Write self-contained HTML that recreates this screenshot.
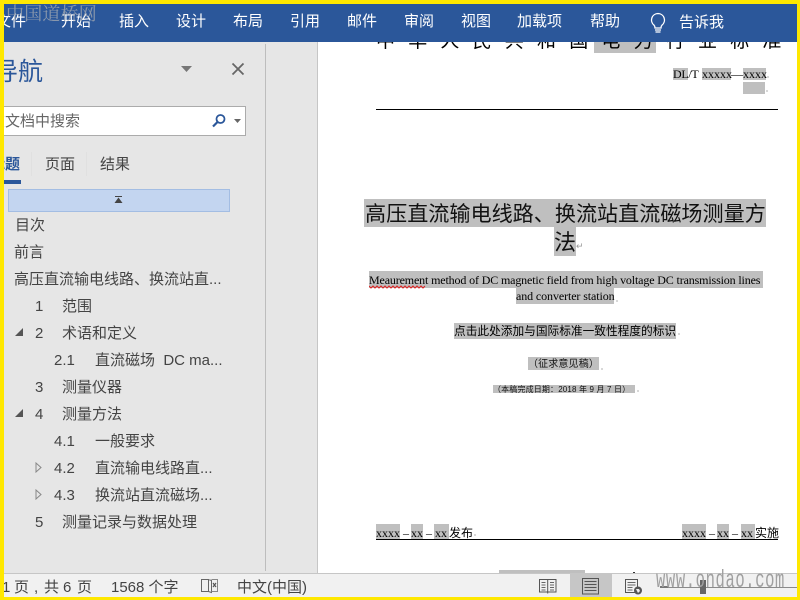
<!DOCTYPE html>
<html><head><meta charset="utf-8">
<style>
html,body{margin:0;padding:0;background:#fff;}
#p{position:relative;width:800px;height:600px;overflow:hidden;background:#fff;font-family:"Liberation Sans","Noto Sans CJK SC",sans-serif;}
#p div{position:absolute;white-space:nowrap;}
.t{color:#fff;font-size:15px;line-height:20px;top:12px;}
.n{color:#444;font-size:15px;line-height:20px;}
.doc{font-family:"Liberation Serif","Noto Sans CJK SC",serif;color:#000;font-size:12px;line-height:16px;}
.g{background:#bfbfbf;}
.d{background:#d8d8d8;width:2px;height:2px;}
</style></head><body>
<div id="p">
<!-- document page -->
<div style="left:318px;top:42px;width:482px;height:532px;background:#fff;"></div>
<div style="left:594px;top:42px;width:62px;height:11px;background:#bfbfbf;"></div>
<div style="left:376px;top:30px;font-size:19px;line-height:24px;letter-spacing:13.2px;color:#000;">中华人民共和国电力行业标准</div>
<div class="g" style="left:673px;top:68px;width:15px;height:12px;"></div>
<div class="g" style="left:702px;top:68px;width:29px;height:12px;"></div>
<div class="g" style="left:743px;top:68px;width:23px;height:12px;"></div>
<div class="g" style="left:743px;top:82px;width:22px;height:12px;"></div>
<div class="doc" style="left:673px;top:66px;letter-spacing:-.3px;">DL/T</div>
<div class="doc" style="left:702px;top:66px;">xxxxx</div>
<div class="doc" style="left:731px;top:66px;">—</div>
<div class="doc" style="left:743px;top:66px;">xxxx</div>
<div class="d" style="left:767px;top:76px;"></div>
<div class="d" style="left:766px;top:90px;"></div>
<div style="left:376px;top:109px;width:402px;height:1px;background:#000;"></div>

<div class="g" style="left:364px;top:199px;width:402px;height:28px;"></div>
<div class="g" style="left:554px;top:227px;width:22px;height:29px;"></div>
<div style="left:365px;top:201px;font-size:21.1px;line-height:28px;color:#111;">高压直流输电线路、换流站直流磁场测量方</div>
<div style="left:554px;top:229px;font-size:22px;line-height:28px;color:#111;">法</div>
<div style="left:576px;top:240px;font-size:9px;line-height:12px;color:#999;">↵</div>

<div class="g" style="left:369px;top:271px;width:394px;height:17px;"></div>
<div class="g" style="left:516px;top:288px;width:98px;height:16px;"></div>
<div class="doc" style="left:369px;top:272px;letter-spacing:-.14px;">Meaurement method of DC magnetic field from high voltage DC transmission lines</div>
<div class="doc" style="left:516px;top:288px;letter-spacing:-.1px;">and converter station</div>
<div class="d" style="left:616px;top:300px;"></div>
<svg style="position:absolute;left:369px;top:284px;" width="60" height="5"><path d="M0 2 l2 2 l2-2 l2 2 l2-2 l2 2 l2-2 l2 2 l2-2 l2 2 l2-2 l2 2 l2-2 l2 2 l2-2 l2 2 l2-2 l2 2 l2-2 l2 2 l2-2 l2 2 l2-2 l2 2 l2-2 l2 2 l2-2 l2 2 l2-2" fill="none" stroke="#d22" stroke-width="1"/></svg>

<div class="g" style="left:454px;top:323px;width:222px;height:16px;"></div>
<div style="left:454px;top:323px;font-size:11.7px;line-height:18px;color:#000;">点击此处添加与国际标准一致性程度的标识</div>
<div class="d" style="left:678px;top:333px;"></div>

<div class="g" style="left:528px;top:357px;width:71px;height:13px;"></div>
<div style="left:528px;top:358px;font-size:10px;line-height:13px;color:#111;letter-spacing:.14px;">（征求意见稿）</div>
<div class="d" style="left:601px;top:368px;"></div>

<div class="g" style="left:493px;top:385px;width:142px;height:8px;"></div>
<div style="left:493px;top:385px;font-size:8px;line-height:10px;color:#111;letter-spacing:.15px;">（本稿完成日期：2018 年 9 月 7 日）</div>
<div class="d" style="left:637px;top:390px;"></div>

<div class="g" style="left:376px;top:524px;width:24px;height:15px;"></div>
<div class="g" style="left:411px;top:524px;width:12px;height:15px;"></div>
<div class="g" style="left:434px;top:524px;width:15px;height:15px;"></div>
<div class="doc" style="left:376px;top:525px;">xxxx</div>
<div class="doc" style="left:403px;top:525px;">–</div>
<div class="doc" style="left:411px;top:525px;">xx</div>
<div class="doc" style="left:426px;top:525px;">–</div>
<div class="doc" style="left:435px;top:525px;">xx</div>
<div class="doc" style="left:449px;top:525px;">发布</div>
<div class="d" style="left:474px;top:534px;"></div>

<div class="g" style="left:682px;top:524px;width:24px;height:15px;"></div>
<div class="g" style="left:717px;top:524px;width:12px;height:15px;"></div>
<div class="g" style="left:741px;top:524px;width:14px;height:15px;"></div>
<div class="doc" style="left:682px;top:525px;">xxxx</div>
<div class="doc" style="left:709px;top:525px;">–</div>
<div class="doc" style="left:717px;top:525px;">xx</div>
<div class="doc" style="left:732px;top:525px;">–</div>
<div class="doc" style="left:741px;top:525px;">xx</div>
<div class="doc" style="left:755px;top:525px;">实施</div>
<div style="left:376px;top:539px;width:402px;height:1px;background:#000;"></div>
<div class="g" style="left:499px;top:570px;width:86px;height:4px;"></div>
<div style="left:633px;top:572px;width:2px;height:1px;background:#333;"></div>

<!-- ribbon -->
<div style="left:0;top:0;width:800px;height:42px;background:#2b579a;"></div>
<div class="t" style="left:-4px;">文件</div>
<div class="t" style="left:61px;">开始</div>
<div class="t" style="left:119px;">插入</div>
<div class="t" style="left:176px;">设计</div>
<div class="t" style="left:233px;">布局</div>
<div class="t" style="left:290px;">引用</div>
<div class="t" style="left:347px;">邮件</div>
<div class="t" style="left:404px;">审阅</div>
<div class="t" style="left:461px;">视图</div>
<div class="t" style="left:517px;">加载项</div>
<div class="t" style="left:590px;">帮助</div>
<svg style="position:absolute;left:648px;top:12px;" width="20" height="22" viewBox="0 0 20 22"><path d="M10 1.500a6.500 6.500 0 0 0-4 11.600c.8.700 1 1.600 1 2.900h6c0-1.300.2-2.200 1-2.900A6.500 6.500 0 0 0 10 1.500z" fill="none" stroke="#fff" stroke-width="1.300"/><path d="M7 18h6M7.500 20h5" stroke="#fff" stroke-width="1.300"/></svg>
<div class="t" style="left:679px;top:13px;">告诉我</div>

<!-- nav pane -->
<div style="left:0;top:42px;width:318px;height:532px;background:#e6e6e6;"></div>
<div style="left:265px;top:44px;width:1px;height:527px;background:#bdbdbd;"></div>
<div style="left:317px;top:42px;width:1px;height:532px;background:#c6c6c6;"></div>
<div style="left:-7px;top:56px;font-size:25px;line-height:32px;color:#2b579a;">导航</div>
<svg style="position:absolute;left:180px;top:65px;" width="13" height="8"><path d="M1 1h11L6.500 7z" fill="#777"/></svg>
<svg style="position:absolute;left:231px;top:62px;" width="14" height="14"><path d="M1.500 1.500l11 11M12.500 1.500l-11 11" stroke="#666" stroke-width="1.800"/></svg>
<div style="left:0;top:106px;width:244px;height:28px;background:#fff;border:1px solid #ababab;"></div>
<div style="left:-10px;top:112px;font-size:15px;line-height:20px;color:#666;">在文档中搜索</div>
<svg style="position:absolute;left:211px;top:113px;" width="16" height="16" viewBox="0 0 16 16"><circle cx="9.500" cy="6" r="4" fill="none" stroke="#2b579a" stroke-width="1.800"/><path d="M6.500 9L2 13.500" stroke="#2b579a" stroke-width="2.200"/></svg>
<svg style="position:absolute;left:234px;top:119px;" width="8" height="5"><path d="M0 0h7L3.500 4z" fill="#666"/></svg>
<div style="left:-10px;top:155px;font-size:15px;line-height:20px;color:#2b579a;font-weight:bold;">标题</div>
<div class="n" style="left:45px;top:155px;">页面</div>
<div class="n" style="left:100px;top:155px;">结果</div>
<div style="left:31px;top:152px;width:1px;height:24px;background:#e0e0e0;"></div>
<div style="left:86px;top:152px;width:1px;height:24px;background:#e0e0e0;"></div>
<div style="left:0;top:180px;width:21px;height:4px;background:#2b579a;"></div>
<div style="left:8px;top:189px;width:220px;height:21px;background:#c3d5f0;border:1px solid #a3bde3;"></div>
<svg style="position:absolute;left:114px;top:196px;" width="9" height="8"><path d="M1 .5h7" stroke="#444"/><path d="M4.500 1.500L8.500 7h-8z" fill="#444"/></svg>

<div class="n" style="left:15px;top:216px;">目次</div>
<div class="n" style="left:14px;top:243px;">前言</div>
<div class="n" style="left:14px;top:270px;">高压直流输电线路、换流站直...</div>
<div class="n" style="left:35px;top:297px;">1</div><div class="n" style="left:62px;top:297px;">范围</div>
<svg style="position:absolute;left:14px;top:327px;" width="10" height="10"><path d="M9 1v8H1z" fill="#555"/></svg>
<div class="n" style="left:35px;top:324px;">2</div><div class="n" style="left:62px;top:324px;">术语和定义</div>
<div class="n" style="left:54px;top:351px;">2.1</div><div class="n" style="left:95px;top:351px;">直流磁场&nbsp; DC ma...</div>
<div class="n" style="left:35px;top:378px;">3</div><div class="n" style="left:62px;top:378px;">测量仪器</div>
<svg style="position:absolute;left:14px;top:408px;" width="10" height="10"><path d="M9 1v8H1z" fill="#555"/></svg>
<div class="n" style="left:35px;top:405px;">4</div><div class="n" style="left:62px;top:405px;">测量方法</div>
<div class="n" style="left:54px;top:432px;">4.1</div><div class="n" style="left:95px;top:432px;">一般要求</div>
<svg style="position:absolute;left:35px;top:462px;" width="8" height="11"><path d="M1 1l5 4.500-5 4.500z" fill="none" stroke="#888"/></svg>
<div class="n" style="left:54px;top:459px;">4.2</div><div class="n" style="left:95px;top:459px;">直流输电线路直...</div>
<svg style="position:absolute;left:35px;top:489px;" width="8" height="11"><path d="M1 1l5 4.500-5 4.500z" fill="none" stroke="#888"/></svg>
<div class="n" style="left:54px;top:486px;">4.3</div><div class="n" style="left:95px;top:486px;">换流站直流磁场...</div>
<div class="n" style="left:35px;top:513px;">5</div><div class="n" style="left:62px;top:513px;">测量记录与数据处理</div>

<!-- status bar -->
<div style="left:0;top:573px;width:800px;height:27px;background:#f1f1f1;border-top:1px solid #c6c6c6;box-sizing:border-box;"></div>
<div class="n" style="left:2px;top:578px;">1</div>
<div class="n" style="left:14px;top:578px;">页</div>
<div class="n" style="left:34px;top:578px;">,</div>
<div class="n" style="left:44px;top:578px;">共</div>
<div class="n" style="left:63px;top:578px;">6</div>
<div class="n" style="left:77px;top:578px;">页</div>
<div class="n" style="left:111px;top:578px;">1568 个字</div>
<svg style="position:absolute;left:200px;top:578px;" width="20" height="16" viewBox="0 0 20 16"><path d="M1.500 1.500h7v12h-7zM8.500 1.500l3 1v12l-3-1" fill="none" stroke="#666"/><path d="M11.500 1.500h6v12h-6" fill="none" stroke="#888"/><path d="M13 5l3 4M16 5l-3 4" stroke="#555" stroke-width="1.200"/></svg>
<div class="n" style="left:237px;top:578px;">中文(中国)</div>
<div style="left:570px;top:574px;width:42px;height:26px;background:#c6c6c6;"></div>
<svg style="position:absolute;left:539px;top:578px;" width="18" height="17" viewBox="0 0 18 17"><path d="M.5 1.500h16.500v12.500H.5zM8.700 1.500v14" fill="none" stroke="#555"/><path d="M2.500 4.500h4M2.500 7h4M2.500 9.500h4M2.500 12h4M11 4.500h4M11 7h4M11 9.500h4M11 12h4" stroke="#666"/></svg>
<svg style="position:absolute;left:582px;top:578px;" width="18" height="17" viewBox="0 0 18 17"><path d="M.5.500h16v15.500H.5z" fill="none" stroke="#555"/><path d="M2.500 3.500h12M2.500 6.500h12M2.500 9.500h12M2.500 12.500h12" stroke="#555"/></svg>
<svg style="position:absolute;left:625px;top:579px;" width="18" height="16" viewBox="0 0 18 16"><path d="M.5.500h12v13H.5z" fill="none" stroke="#555"/><path d="M2.500 3.500h8M2.500 6h8M2.500 8.500h5M2.500 11h5" stroke="#666"/><circle cx="13" cy="11.500" r="4" fill="#555"/><path d="M11 10h3l1 2-2 2z" fill="#eee"/></svg>
<div style="left:660px;top:587px;width:137px;height:1px;background:#8a8a8a;"></div>
<div style="left:660px;top:586px;width:8px;height:2px;background:#777;"></div>
<div style="left:700px;top:580px;width:6px;height:14px;background:#666;"></div>

<!-- watermarks -->
<div style="left:656px;top:566px;font-family:'Liberation Mono',monospace;font-size:25px;line-height:30px;color:#a0a0a0;transform:scaleX(.62);transform-origin:0 0;letter-spacing:1px;">www.ondao.com</div>
<div style="left:6px;top:2px;font-family:'Noto Serif CJK SC',serif;font-size:18px;line-height:22px;color:#9aa3b0;letter-spacing:.2px;opacity:.85;">中国道桥网</div>

<!-- yellow frame -->
<div style="left:0;top:0;width:800px;height:3.500px;background:#ffe800;"></div>
<div style="left:0;top:0;width:4px;height:600px;background:#ffe800;"></div>
<div style="left:796.500px;top:0;width:3.500px;height:600px;background:#ffe800;"></div>
<div style="left:0;top:597px;width:800px;height:3px;background:#ffe800;"></div>
</div>
</body></html>
